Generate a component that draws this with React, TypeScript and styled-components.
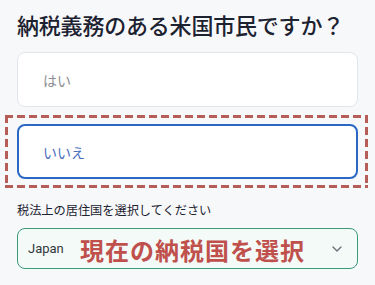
import { createGlobalStyle } from "styled-components"
import styled from "styled-components"
import { ChevronDown } from "lucide-react"

const GlobalStyle = createGlobalStyle`
  html, body {
    margin: 0;
    padding: 0;
    background: #f7f8fa;
  }
  body {
    font-family: "Noto Sans CJK JP", "Noto Sans", sans-serif;
    color: #1c2230;
  }
  * {
    box-sizing: border-box;
  }
`

const Page = styled.div`
  width: 375px;
  height: 285px;
  padding: 9px 17px 0;
  overflow: hidden;
`

const Title = styled.h1`
  margin: 0 0 13px;
  font-size: 22px;
  line-height: 30px;
  font-weight: 500;
  letter-spacing: -0.2px;
  color: #1c2230;
`

const Options = styled.div`
  display: flex;
  flex-direction: column;
  gap: 17px;
`

const Option = styled.div<{ selected?: boolean }>`
  height: 55px;
  display: flex;
  align-items: center;
  background: #ffffff;
  border-radius: 8px;
  border: ${({ selected }) => (selected ? "2px solid #2b68c4" : "1px solid #e2e5ea")};
  padding-left: ${({ selected }) => (selected ? "24px" : "25px")};
  color: ${({ selected }) => (selected ? "#4a6dbd" : "#8a8d93")};
  font-size: 14px;
`

// dashed annotation frame, 8px dashes with 4px gaps
const dash = "#b65d58"
const Highlight = styled.div`
  margin: -9px -10px -9px -12px;
  padding: 9px 10px 9px 12px;
  background:
    repeating-linear-gradient(90deg, ${dash} 0 8px, transparent 8px 12px) top left / 100% 3px no-repeat,
    repeating-linear-gradient(90deg, ${dash} 0 8px, transparent 8px 12px) bottom left / 100% 3px no-repeat,
    repeating-linear-gradient(180deg, ${dash} 0 8px, transparent 8px 12px) top left / 3px 100% no-repeat,
    repeating-linear-gradient(180deg, ${dash} 0 8px, transparent 8px 12px) top right / 3px 100% no-repeat;
`

const Label = styled.div`
  margin-top: 22px;
  font-size: 12.2px;
  line-height: 18px;
  color: #1c2230;
`

const Select = styled.div`
  position: relative;
  margin-top: 9px;
  height: 41px;
  display: flex;
  align-items: center;
  justify-content: space-between;
  padding: 0 12px 0 10px;
  background: #f3faf7;
  border: 1px solid #3b9a78;
  border-radius: 8px;
  font-family: Roboto, "Noto Sans", sans-serif;
  font-size: 13px;
  color: #333840;
  svg {
    color: #6b7078;
  }
`

const Annotation = styled.span`
  position: absolute;
  left: 62px;
  top: 50%;
  transform: translateY(-50%);
  font-family: "Noto Sans CJK JP", sans-serif;
  font-size: 24px;
  font-weight: 700;
  letter-spacing: 1px;
  color: #c0504c;
  white-space: nowrap;
`

export default function App() {
  return (
    <Page>
      <GlobalStyle />
      <Title>納税義務のある米国市民ですか？</Title>
      <Options>
        <Option>はい</Option>
        <Highlight>
          <Option selected>いいえ</Option>
        </Highlight>
      </Options>
      <Label>税法上の居住国を選択してください</Label>
      <Select>
        <span>Japan</span>
        <Annotation>現在の納税国を選択</Annotation>
        <ChevronDown size={16} strokeWidth={2} />
      </Select>
    </Page>
  )
}
